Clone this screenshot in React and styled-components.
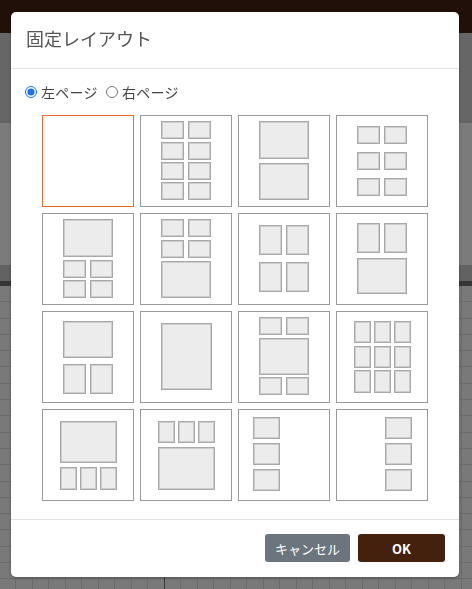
import React, { useState } from 'react';
import styled, { createGlobalStyle } from 'styled-components';

const GlobalStyle = createGlobalStyle`
  html, body { margin: 0; padding: 0; height: 100%; }
  body {
    font-family: "Noto Sans CJK JP", "Noto Sans", sans-serif;
    overflow: hidden;
  }
`;

// each layout: list of [x, y, w, h] in tile coordinates (tile is 92x92)
const layouts = [
  [],
  [[21, 6, 23, 18], [48, 6, 23, 18], [21, 27, 23, 18], [48, 27, 23, 18], [21, 47, 23, 18], [48, 47, 23, 18], [21, 67, 23, 18], [48, 67, 23, 18]],
  [[21, 6, 50, 38], [21, 48, 50, 37]],
  [[21, 11, 23, 18], [48, 11, 23, 18], [21, 37, 23, 18], [48, 37, 23, 18], [21, 63, 23, 18], [48, 63, 23, 18]],
  [[21, 6, 50, 38], [21, 47, 23, 18], [48, 47, 23, 18], [21, 67, 23, 18], [48, 67, 23, 18]],
  [[21, 6, 23, 18], [48, 6, 23, 18], [21, 27, 23, 18], [48, 27, 23, 18], [21, 48, 50, 37]],
  [[21, 12, 23, 30], [48, 12, 23, 30], [21, 49, 23, 30], [48, 49, 23, 30]],
  [[21, 10, 23, 30], [48, 10, 23, 30], [21, 45, 50, 36]],
  [[21, 10, 50, 37], [21, 53, 23, 30], [48, 53, 23, 30]],
  [[21, 12, 51, 67]],
  [[21, 6, 23, 18], [48, 6, 23, 18], [21, 27, 50, 37], [21, 66, 23, 18], [48, 66, 23, 18]],
  [[18, 10, 17, 22], [38, 10, 17, 22], [58, 10, 17, 22], [18, 35, 17, 22], [38, 35, 17, 22], [58, 35, 17, 22], [18, 59, 17, 23], [38, 59, 17, 23], [58, 59, 17, 23]],
  [[18, 12, 57, 42], [18, 58, 17, 23], [38, 58, 17, 23], [58, 58, 17, 23]],
  [[18, 12, 17, 22], [38, 12, 17, 22], [58, 12, 17, 22], [18, 38, 57, 43]],
  [[15, 8, 27, 22], [15, 34, 27, 22], [15, 60, 27, 22]],
  [[49, 8, 27, 22], [49, 34, 27, 22], [49, 60, 27, 22]],
];

export default function App() {
  const [side, setSide] = useState('left');
  const [selected, setSelected] = useState(0);

  return (
    <>
      <GlobalStyle />
      <Backdrop>
        <AppHeader />
        <Toolbar />
        <Panel />
        <Band />
        <Divider />
        <Canvas />
      </Backdrop>

      <Modal>
        <ModalHeader>
          <Title>固定レイアウト</Title>
        </ModalHeader>
        <ModalBody>
          <RadioRow>
            <RadioLabel>
              <Radio type="radio" name="side" checked={side === 'left'} onChange={() => setSide('left')} />
              左ページ
            </RadioLabel>
            <RadioLabel>
              <Radio type="radio" name="side" checked={side === 'right'} onChange={() => setSide('right')} />
              右ページ
            </RadioLabel>
          </RadioRow>
          <Grid>
            {layouts.map((rects, i) => (
              <Tile key={i} $active={selected === i} onClick={() => setSelected(i)}>
                <svg width="90" height="90" viewBox="1 1 90 90">
                  {rects.map(([x, y, w, h], j) => (
                    <g key={j}>
                      <rect x={x} y={y} width={w} height={h} fill="#a9a9a9" />
                      <rect x={x + 1} y={y + 1} width={w - 2} height={h - 2} fill="#cdcdcd" />
                      <rect x={x + 2} y={y + 2} width={w - 4} height={h - 4} fill="#ececec" />
                    </g>
                  ))}
                </svg>
              </Tile>
            ))}
          </Grid>
        </ModalBody>
        <ModalFooter>
          <Button $variant="cancel">キャンセル</Button>
          <Button $variant="ok">OK</Button>
        </ModalFooter>
      </Modal>
    </>
  );
}

const Backdrop = styled.div`
  display: flex;
  flex-direction: column;
  height: 100vh;
  background: #787878;
`;

const AppHeader = styled.div`
  height: 33px;
  background: #211009;
`;

const Toolbar = styled.div`
  height: 90px;
  background: #666666;
`;

const Panel = styled.div`
  height: 142px;
  background: #7b7b7b;
`;

const Band = styled.div`
  height: 16px;
  background: #626262;
`;

const Divider = styled.div`
  height: 5px;
  background: #363636;
`;

const Canvas = styled.div`
  flex: 1;
  background-color: #797979;
  background-image:
    linear-gradient(to right, transparent 164px, #3a3a3a 164px, #3a3a3a 165px, transparent 165px),
    repeating-linear-gradient(to right, transparent 0, transparent 15.5px, #6c6c6c 15.5px, #6c6c6c 16.5px),
    repeating-linear-gradient(to bottom, transparent 0, transparent 15.3px, #6c6c6c 15.3px, #6c6c6c 16.3px);
`;

const Modal = styled.div`
  position: fixed;
  top: 12px;
  left: 11px;
  width: 448px;
  background: #fff;
  border-radius: 5px;
  box-shadow: 0 1px 3px rgba(0, 0, 0, 0.3);
  display: flex;
  flex-direction: column;
`;

const ModalHeader = styled.div`
  padding: 13px 15px 17px 15px;
  border-bottom: 1px solid #dee2e6;
`;

const Title = styled.h5`
  margin: 0;
  font-size: 18px;
  line-height: 26px;
  font-weight: 400;
  color: #555;
`;

const ModalBody = styled.div`
  padding: 13px 14px 18px;
  display: flex;
  flex-direction: column;
  gap: 13px;
`;

const RadioRow = styled.div`
  display: flex;
  align-items: center;
  gap: 8px;
  height: 20px;
`;

const RadioLabel = styled.label`
  display: flex;
  align-items: center;
  font-size: 14px;
  color: #444;
  line-height: 20px;
  letter-spacing: 0.3px;
`;

const Radio = styled.input`
  width: 12px;
  height: 12px;
  margin: 0 4px 0 0;
  accent-color: #1a73e8;
`;

const Grid = styled.div`
  width: 386px;
  margin: 0 auto;
  display: grid;
  grid-template-columns: repeat(4, 92px);
  grid-auto-rows: 92px;
  gap: 6px;
`;

const Tile = styled.div`
  box-sizing: border-box;
  width: 92px;
  height: 92px;
  border: 1px solid ${(p) => (p.$active ? '#f0682c' : '#9a9a9a')};
  background: #fff;
  cursor: pointer;

  svg {
    display: block;
  }
`;

const ModalFooter = styled.div`
  border-top: 1px solid #e3e3e3;
  padding: 14px 14px 15px;
  display: flex;
  justify-content: flex-end;
  gap: 8px;
`;

const Button = styled.button`
  height: 28px;
  width: ${(p) => (p.$variant === 'ok' ? '87px' : '85px')};
  border: none;
  border-radius: 3px;
  font-family: "Noto Sans CJK JP", "Noto Sans", sans-serif;
  font-size: 13px;
  font-weight: ${(p) => (p.$variant === 'ok' ? 700 : 400)};
  color: #fff;
  background: ${(p) => (p.$variant === 'ok' ? '#43210c' : '#6c757d')};
  cursor: pointer;
  padding: 0;
`;
